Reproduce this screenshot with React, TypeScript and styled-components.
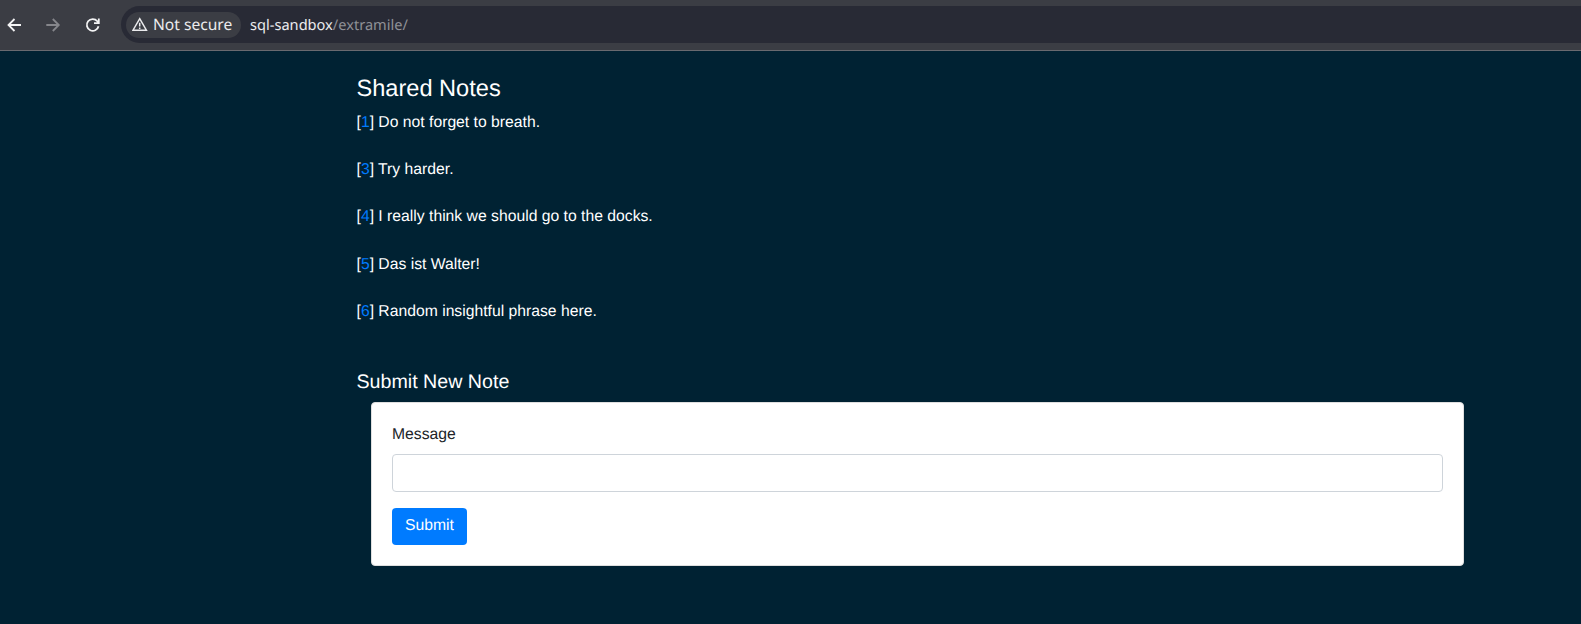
import React from "react";
import styled, { createGlobalStyle } from "styled-components";

const GlobalStyle = createGlobalStyle`
  *, *::before, *::after { box-sizing: border-box; }
  html, body { margin: 0; height: 100%; overflow: hidden; background: #002233; }
  body {
    font-family: "Liberation Sans", Arial, sans-serif;
    font-size: 15.72px;
    line-height: 23.55px;
    color: #fff;
    text-rendering: geometricPrecision;
  }
`;

const Toolbar = styled.header`
  display: flex;
  align-items: flex-start;
  height: 51px;
  padding-top: 6px;
  background: #3b3d44;
  border-bottom: 1px solid #696a70;
  font-family: "Noto Sans", sans-serif;
`;

const Navigation = styled.nav`
  display: flex;
  align-items: center;
  width: 121px;
  height: 37px;
  padding-left: 6px;
  gap: 23.4px;
`;

const NavButton = styled.button<{ $muted?: boolean }>`
  display: flex;
  width: 16px;
  height: 16px;
  padding: 0;
  border: 0;
  background: none;
  color: ${(p) => (p.$muted ? "#85868b" : "#f4f4f5")};
`;

const AddressBar = styled.div`
  display: flex;
  align-items: center;
  flex: 1;
  height: 37px;
  padding-left: 5px;
  border-radius: 19px 0 0 19px;
  background: #282a35;
`;

const SecurityChip = styled.div`
  display: flex;
  align-items: center;
  gap: 5px;
  width: 115px;
  height: 26px;
  padding-left: 6px;
  border-radius: 13px;
  background: #3b3d44;
  color: #ebebed;
  font-size: 15.6px;
  line-height: 24px;
  white-space: nowrap;
`;

const ChipLabel = styled.span`
  padding-bottom: 2px;
`;

const Address = styled.div`
  margin-left: 9px;
  color: #ebebed;
  font-size: 14.6px;
  line-height: 24px;
`;

const AddressPath = styled.span`
  color: #8e9096;
`;

const Page = styled.main`
  width: 1107.5px;
  margin-left: 356.5px;
  padding-top: 23px;
`;

const Title = styled.h4`
  margin: 0 0 8.4px;
  font-size: 23.58px;
  line-height: 28.3px;
  font-weight: 400;
`;

const NoteList = styled.div`
  display: flex;
  flex-direction: column;
  gap: 23.75px;
`;

const Note = styled.div`
  height: 23.55px;
`;

const NoteLink = styled.a`
  color: #007bff;
  text-decoration: none;
`;

const FormTitle = styled.h5`
  margin: 47.4px 0 7.2px;
  font-size: 19.65px;
  line-height: 23.6px;
  font-weight: 400;
`;

const Card = styled.form`
  display: flex;
  flex-direction: column;
  align-items: flex-start;
  height: 164px;
  margin-left: 14.5px;
  padding: 19px 20px;
  border: 1px solid #dfdfdf;
  border-radius: 4px;
  background: #fff;
`;

const Label = styled.label`
  height: 24px;
  margin-bottom: 8px;
  padding-top: 1px;
  color: #212529;
`;

const MessageInput = styled.input`
  width: 100%;
  height: 38px;
  margin: 0 0 16px;
  padding: 6px 12px;
  border: 1px solid #ced4da;
  border-radius: 4px;
  background: #fff;
  font: inherit;
`;

const SubmitButton = styled.button`
  width: 75px;
  height: 37px;
  padding: 0 0 1px;
  border: 0;
  border-radius: 4px;
  background: #007bff;
  color: #fff;
  font: inherit;
  text-rendering: inherit;
`;

const BackIcon = () => (
  <svg width="16" height="16" viewBox="0 0 16 16" fill="none" stroke="currentColor" strokeWidth="1.8">
    <path d="M15 8H3M8.5 2 2.5 8l6 6" />
  </svg>
);

const ForwardIcon = () => (
  <svg width="16" height="16" viewBox="0 0 16 16" fill="none" stroke="currentColor" strokeWidth="1.8">
    <path d="M1.3 8h12M7.8 2l6 6-6 6" />
  </svg>
);

const ReloadIcon = () => (
  <svg width="16" height="16" viewBox="0 0 16 16" fill="none" stroke="currentColor" strokeWidth="1.8">
    <path d="M13.5 9.2A5.9 5.9 0 1 1 12.3 4.2L13.8 5.8M13.8 1.5V6.2H9" />
  </svg>
);

const WarningIcon = () => (
  <svg width="16" height="16" viewBox="0 0 16 16" fill="none" stroke="currentColor" strokeWidth="1.5">
    <path d="M7.7 1.7 14.4 13.2H1ZM7.7 5.7v3.7M7.7 10.4v1.5" />
  </svg>
);

const notes = [
  { id: 1, text: "Do not forget to breath." },
  { id: 3, text: "Try harder." },
  { id: 4, text: "I really think we should go to the docks." },
  { id: 5, text: "Das ist Walter!" },
  { id: 6, text: "Random insightful phrase here." },
];

export default function App() {
  return (
    <>
      <GlobalStyle />
      <Toolbar>
        <Navigation>
          <NavButton aria-label="Back"><BackIcon /></NavButton>
          <NavButton aria-label="Forward" $muted><ForwardIcon /></NavButton>
          <NavButton aria-label="Reload"><ReloadIcon /></NavButton>
        </Navigation>
        <AddressBar>
          <SecurityChip><WarningIcon /><ChipLabel>Not secure</ChipLabel></SecurityChip>
          <Address>sql-sandbox<AddressPath>/extramile/</AddressPath></Address>
        </AddressBar>
      </Toolbar>
      <Page>
        <Title>Shared Notes</Title>
        <NoteList>
          {notes.map((note) => (
            <Note key={note.id}>
              [<NoteLink href={`#${note.id}`}>{note.id}</NoteLink>] {note.text}
            </Note>
          ))}
        </NoteList>
        <FormTitle>Submit New Note</FormTitle>
        <Card onSubmit={(event) => event.preventDefault()}>
          <Label htmlFor="message">Message</Label>
          <MessageInput id="message" />
          <SubmitButton type="submit">Submit</SubmitButton>
        </Card>
      </Page>
    </>
  );
}
